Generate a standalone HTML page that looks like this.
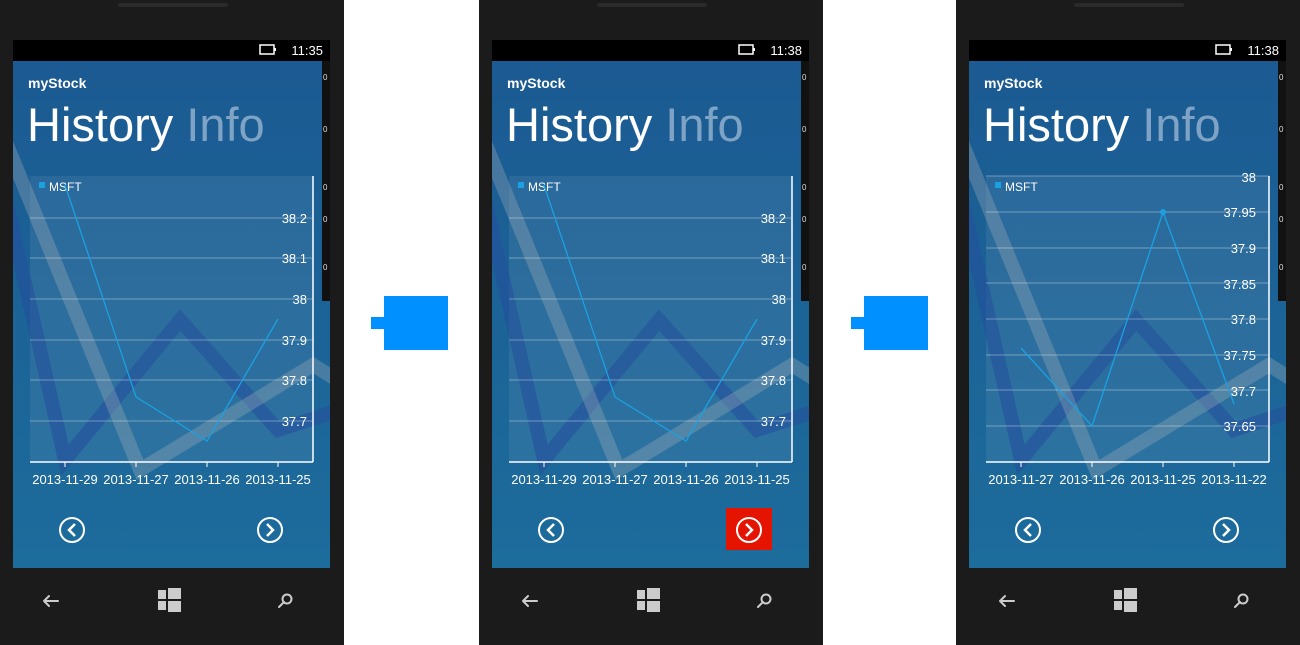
<!DOCTYPE html>
<html><head><meta charset="utf-8"><style>
html,body{margin:0;padding:0;background:#fff;width:1300px;height:645px;overflow:hidden}
svg{display:block}
text{font-family:"Liberation Sans",sans-serif}
</style></head><body>
<svg width="1300" height="645" viewBox="0 0 1300 645" xmlns="http://www.w3.org/2000/svg">
<defs>
<linearGradient id="sg" x1="0" y1="0" x2="0" y2="1">
<stop offset="0" stop-color="#1b5a92"/><stop offset="1" stop-color="#1c6c9c"/>
</linearGradient>
<clipPath id="sc"><rect x="13" y="61" width="317" height="507"/></clipPath>
<g id="phone">
<rect x="0" y="0" width="344" height="645" fill="#1b1b1b"/>
<rect x="118" y="3" width="110" height="4" rx="2" fill="#2a2a2a"/>
<rect x="13" y="40" width="317" height="21" fill="#000"/>
<rect x="13" y="61" width="317" height="507" fill="url(#sg)"/>
<g clip-path="url(#sc)">
<rect x="30" y="176" width="283" height="286" fill="#fff" opacity="0.07"/>
<polyline points="5,195 65,460 180,320 278,430 340,410" fill="none" stroke="#24509c" stroke-width="14" opacity="0.6"/>
<polyline points="5,140 140,470 313,365 345,385" fill="none" stroke="#a8b0b8" stroke-width="14" opacity="0.32"/>
</g>
<text x="28" y="88" font-size="14" font-weight="bold" fill="#fff">myStock</text>
<text x="27" y="141" font-size="47" fill="#fff">History <tspan fill="#7fa3c4">Info</tspan></text>
<rect x="322" y="61" width="8" height="240" fill="#111"/>
<g font-family="Liberation Mono" font-size="8" fill="#ddd"><text x="323" y="80">0</text><text x="323" y="132">0</text><text x="323" y="190">0</text><text x="323" y="222">0</text><text x="323" y="270">0</text></g>
<line x1="313" y1="176" x2="313" y2="462" stroke="#fff" stroke-width="1.5"/>
<line x1="30" y1="462" x2="313" y2="462" stroke="#fff" stroke-width="1.5"/>
<g stroke="#fff" stroke-width="1"><line x1="65" y1="462" x2="65" y2="467"/><line x1="136" y1="462" x2="136" y2="467"/><line x1="207" y1="462" x2="207" y2="467"/><line x1="278" y1="462" x2="278" y2="467"/></g>
<rect x="39" y="182" width="6" height="6" fill="#1ba1e2"/>
<text x="49" y="191" font-size="12" fill="#fff">MSFT</text>
<g fill="#fff"><rect x="260" y="45" width="14" height="9" fill="none" stroke="#fff" stroke-width="1.5"/><rect x="274" y="48" width="2" height="3"/></g>
<g stroke="#ccc" stroke-width="2" fill="none" stroke-linecap="round">
<path d="M44 601 H58 M44 601 L49 596 M44 601 L49 606"/>
<circle cx="287" cy="599" r="4.5"/><path d="M284 602 L279 607"/>
</g>
<g fill="#ccc"><rect x="158" y="590" width="8" height="9"/><rect x="168" y="588" width="13" height="11"/><rect x="158" y="601" width="8" height="9"/><rect x="168" y="601" width="13" height="11"/></g>
</g>
<g id="navL"><circle cx="72" cy="530" r="12" fill="none" stroke="#fff" stroke-width="2"/><path d="M75 524 L69 530 L75 536" fill="none" stroke="#fff" stroke-width="2.5"/></g>
<g id="navR"><circle cx="270" cy="530" r="12" fill="none" stroke="#fff" stroke-width="2"/><path d="M267 524 L273 530 L267 536" fill="none" stroke="#fff" stroke-width="2.5"/></g>
<g id="grid1" font-size="13" fill="#fff" text-anchor="end">
<g stroke="#fff" stroke-opacity="0.35"><line x1="30" y1="218" x2="313" y2="218"/><line x1="30" y1="258" x2="313" y2="258"/><line x1="30" y1="299" x2="313" y2="299"/><line x1="30" y1="340" x2="313" y2="340"/><line x1="30" y1="380" x2="313" y2="380"/><line x1="30" y1="421" x2="313" y2="421"/></g>
<text x="307" y="223">38.2</text><text x="307" y="263">38.1</text><text x="307" y="304">38</text><text x="307" y="345">37.9</text><text x="307" y="385">37.8</text><text x="307" y="426">37.7</text>
<polyline points="65,185 136,397 207,441 278,319" fill="none" stroke="#1ba1e2" stroke-width="1.3"/>
</g>
</defs>

<use href="#phone"/>
<use href="#grid1"/><use href="#navL"/><use href="#navR"/>
<text x="323" y="55" font-size="13" fill="#fff" text-anchor="end">11:35</text>
<g font-size="13" fill="#fff" text-anchor="middle"><text x="65" y="484">2013-11-29</text><text x="136" y="484">2013-11-27</text><text x="207" y="484">2013-11-26</text><text x="278" y="484">2013-11-25</text></g>

<g fill="#0090ff"><rect x="384" y="296" width="64" height="54"/><rect x="371" y="317" width="13" height="12"/></g>

<g transform="translate(479,0)">
<use href="#phone"/>
<use href="#grid1"/><use href="#navL"/>
<rect x="247" y="508" width="46" height="42" fill="#e51400"/>
<use href="#navR"/>
<text x="323" y="55" font-size="13" fill="#fff" text-anchor="end">11:38</text>
<g font-size="13" fill="#fff" text-anchor="middle"><text x="65" y="484">2013-11-29</text><text x="136" y="484">2013-11-27</text><text x="207" y="484">2013-11-26</text><text x="278" y="484">2013-11-25</text></g>
</g>

<g fill="#0090ff"><rect x="864" y="296" width="64" height="54"/><rect x="851" y="317" width="13" height="12"/></g>

<g transform="translate(956,0)">
<use href="#phone"/>
<use href="#navL"/><use href="#navR"/>
<text x="323" y="55" font-size="13" fill="#fff" text-anchor="end">11:38</text>
<g stroke="#fff" stroke-opacity="0.35"><line x1="30" y1="176" x2="313" y2="176"/><line x1="30" y1="212" x2="313" y2="212"/><line x1="30" y1="248" x2="313" y2="248"/><line x1="30" y1="283" x2="313" y2="283"/><line x1="30" y1="319" x2="313" y2="319"/><line x1="30" y1="355" x2="313" y2="355"/><line x1="30" y1="390" x2="313" y2="390"/><line x1="30" y1="426" x2="313" y2="426"/></g>
<g font-size="13" fill="#fff" text-anchor="end"><text x="300" y="182">38</text><text x="300" y="217">37.95</text><text x="300" y="253">37.9</text><text x="300" y="289">37.85</text><text x="300" y="324">37.8</text><text x="300" y="360">37.75</text><text x="300" y="396">37.7</text><text x="300" y="431">37.65</text></g>
<polyline points="65,348 136,426 207,212 278,404" fill="none" stroke="#1ba1e2" stroke-width="1.3"/>
<circle cx="207" cy="212" r="3" fill="#1ba1e2"/>
<g font-size="13" fill="#fff" text-anchor="middle"><text x="65" y="484">2013-11-27</text><text x="136" y="484">2013-11-26</text><text x="207" y="484">2013-11-25</text><text x="278" y="484">2013-11-22</text></g>
</g>
</svg>
</body></html>
